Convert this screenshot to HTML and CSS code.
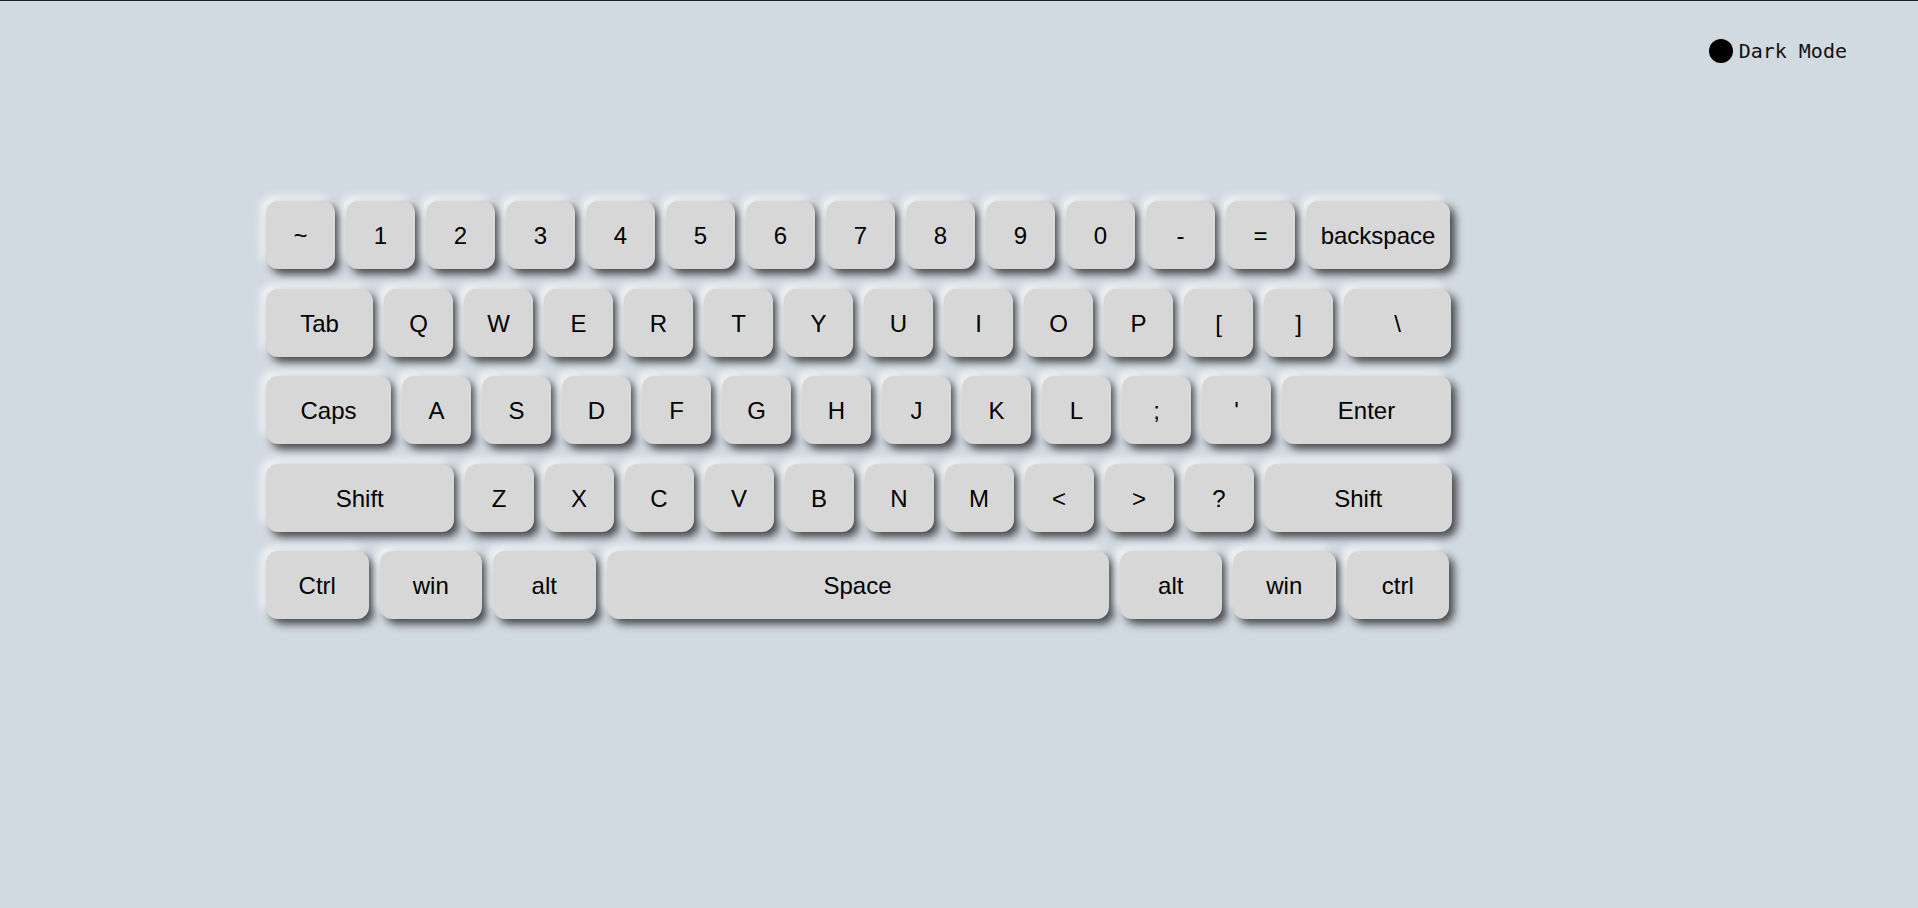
FILE: index.html
```html
<!DOCTYPE html>
<html lang="en">
<head>
<meta charset="utf-8">
<title>Keyboard</title>
<link rel="stylesheet" href="styles.css">
</head>
<body>
<div class="topbar">
  <div class="toggle"><span class="dot"></span><span class="toggle-label">Dark Mode</span></div>
</div>
<div class="keyboard">
  <div class="row">
    <div class="key">~</div><div class="key">1</div><div class="key">2</div><div class="key">3</div><div class="key">4</div><div class="key">5</div><div class="key">6</div><div class="key">7</div><div class="key">8</div><div class="key">9</div><div class="key">0</div><div class="key">-</div><div class="key">=</div><div class="key w-back">backspace</div>
  </div>
  <div class="row">
    <div class="key w-tab">Tab</div><div class="key">Q</div><div class="key">W</div><div class="key">E</div><div class="key">R</div><div class="key">T</div><div class="key">Y</div><div class="key">U</div><div class="key">I</div><div class="key">O</div><div class="key">P</div><div class="key">[</div><div class="key">]</div><div class="key w-tab">\</div>
  </div>
  <div class="row">
    <div class="key w-caps">Caps</div><div class="key">A</div><div class="key">S</div><div class="key">D</div><div class="key">F</div><div class="key">G</div><div class="key">H</div><div class="key">J</div><div class="key">K</div><div class="key">L</div><div class="key">;</div><div class="key">'</div><div class="key w-enter">Enter</div>
  </div>
  <div class="row">
    <div class="key w-shift">Shift</div><div class="key">Z</div><div class="key">X</div><div class="key">C</div><div class="key">V</div><div class="key">B</div><div class="key">N</div><div class="key">M</div><div class="key">&lt;</div><div class="key">&gt;</div><div class="key">?</div><div class="key w-shift">Shift</div>
  </div>
  <div class="row">
    <div class="key w-mod">Ctrl</div><div class="key w-mod">win</div><div class="key w-mod">alt</div><div class="key w-space">Space</div><div class="key w-mod">alt</div><div class="key w-mod">win</div><div class="key w-mod">ctrl</div>
  </div>
</div>
</body>
</html>
```
FILE: styles.css
```css
html, body {
  margin: 0;
  padding: 0;
}
body {
  background: #d1d9e1;
  border-top: 1px solid #1f1f1f;
  min-height: 907px;
  font-family: "Liberation Sans", Arial, sans-serif;
}
.topbar {
  display: flex;
  justify-content: flex-end;
  padding: 38px 71px 0 0;
}
.toggle {
  display: flex;
  align-items: center;
  gap: 6px;
}
.dot {
  width: 24px;
  height: 24px;
  border-radius: 50%;
  background: #000;
}
.toggle-label {
  font-family: "DejaVu Sans Mono", monospace;
  font-size: 20px;
  color: #111;
}
.keyboard {
  margin: 138px 0 0 266px;
  display: flex;
  flex-direction: column;
  gap: 19.5px;
}
.row {
  display: flex;
  gap: 11px;
}
.key {
  width: 69px;
  height: 68px;
  box-sizing: border-box;
  padding-top: 2px;
  flex: none;
  display: flex;
  align-items: center;
  justify-content: center;
  background: #d7d7d7;
  border-radius: 12px;
  font-size: 24px;
  color: #000;
  box-shadow: 5px 5px 8px rgba(0, 0, 0, 0.68), -5px -5px 10px rgba(255, 255, 255, 0.75);
}
.w-back { width: 144px; }
.w-tab { width: 107px; }
.w-caps { width: 125px; }
.w-enter { width: 169px; }
.w-shift { width: 187.5px; }
.w-mod { width: 102.5px; }
.w-space { width: 502px; }
```
